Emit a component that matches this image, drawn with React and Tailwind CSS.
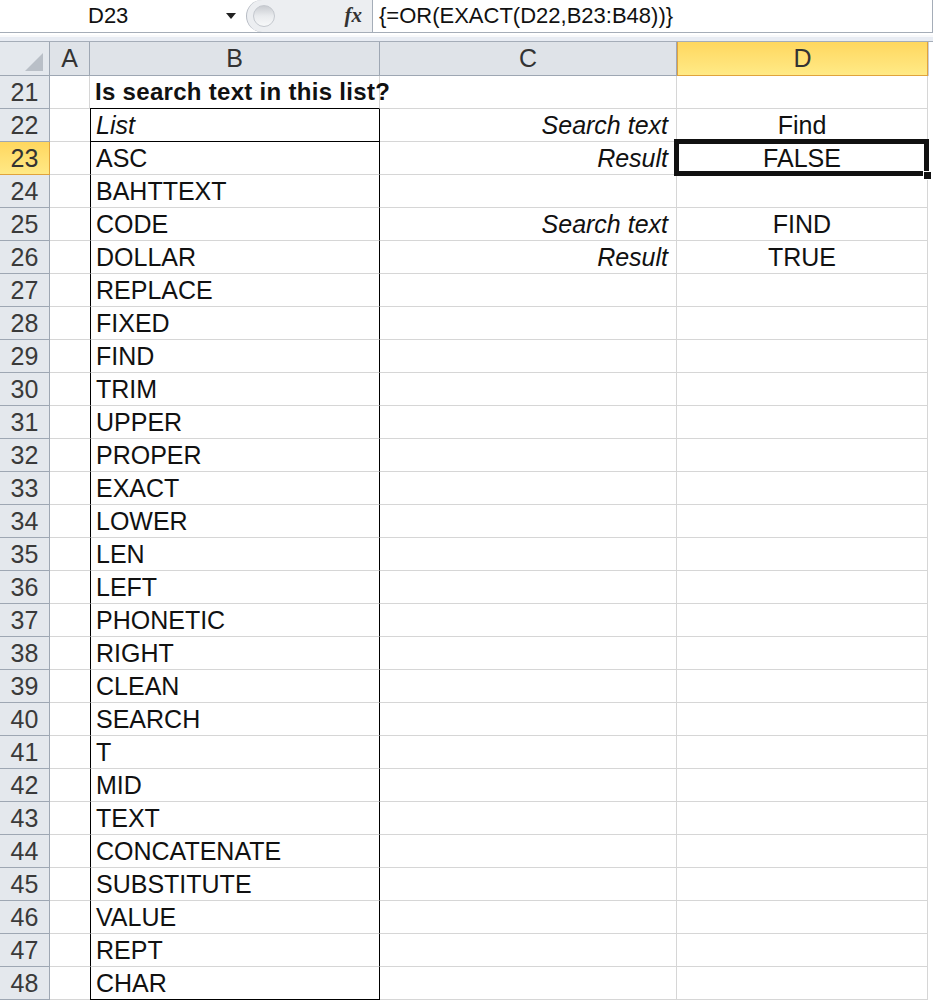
import React from 'react';

const items = [
  'ASC', 'BAHTTEXT', 'CODE', 'DOLLAR', 'REPLACE', 'FIXED', 'FIND', 'TRIM', 'UPPER', 'PROPER',
  'EXACT', 'LOWER', 'LEN', 'LEFT', 'PHONETIC', 'RIGHT', 'CLEAN', 'SEARCH', 'T', 'MID',
  'TEXT', 'CONCATENATE', 'SUBSTITUTE', 'VALUE', 'REPT', 'CHAR',
];

const side = {
  22: ['Search text', 'Find'],
  23: ['Result', 'FALSE'],
  25: ['Search text', 'FIND'],
  26: ['Result', 'TRUE'],
};

function RowHead({ n, active }) {
  return (
    <div
      className={
        'w-[50px] h-full flex items-center justify-center border-r border-b ' +
        (active
          ? 'bg-gradient-to-b from-[#ffd75e] to-[#ffe985] border-[#e0a33d] text-[#333]'
          : 'bg-[#e4e8ed] border-[#9ea7b3] text-[#3a3a3a]')
      }
    >
      {n}
    </div>
  );
}

function Row({ n }) {
  const idx = n - 23;
  const s = side[n];
  let b = null;
  if (n === 21) b = <span className="font-bold whitespace-nowrap text-[24px] tracking-[0.3px]">Is search text in this list?</span>;
  else if (n === 22) b = <span className="italic">List</span>;
  else if (idx >= 0) b = items[idx];

  const inList = n >= 22;
  const selected = n === 23;
  return (
    <div className={'flex h-[33px] relative ' + (selected ? 'z-20' : '')}>
      <RowHead n={n} active={selected} />
      <div className={'w-[40px] h-full border-b border-[#d6d6d6] ' + (inList ? '' : 'border-r')} />
      <div
        className={
          'w-[290px] h-full flex items-center pl-[5px] relative z-10 ' +
          (inList
            ? 'border-x border-x-black ' + (n === 22 || n === 48 ? 'border-b border-b-black' : 'border-b border-b-[#d6d6d6]')
            : 'border-b border-b-black border-r border-r-[#d6d6d6]')
        }
      >
        {b}
      </div>
      <div className="w-[297px] h-full flex items-center justify-end pr-[8px] border-r border-b border-[#d6d6d6] italic">
        {s ? s[0] : ''}
      </div>
      <div className="w-[251px] h-full flex items-center justify-center border-r border-b border-[#d6d6d6] relative">
        {s ? s[1] : ''}
        {selected && (
          <>
            <div className="absolute -left-[3px] -top-[3px] -right-[2px] -bottom-[2px] border-[5px] border-[#111]" />
            <div className="absolute -right-[5px] -bottom-[6px] w-[9px] h-[9px] bg-[#111] border border-white" />
          </>
        )}
      </div>
    </div>
  );
}

export default function App() {
  const rows = [];
  for (let n = 21; n <= 48; n++) rows.push(<Row key={n} n={n} />);

  return (
    <div className="w-[933px] h-[1000px] bg-white overflow-hidden text-[#111] text-[25px] leading-none" style={{ fontFamily: '"Liberation Sans", Arial, sans-serif' }}>
      {/* formula bar */}
      <div className="flex h-[33px] border-b border-[#a5adb8] border-r">
        <div className="w-[246px] h-full flex items-center relative text-[22px]">
          <span className="ml-[88px]">D23</span>
          <svg className="absolute left-[226px] top-[13px]" width="10" height="6" viewBox="0 0 10 6">
            <path d="M0 0 L10 0 L5 6 Z" fill="#222" />
          </svg>
        </div>
        <div className="w-[126px] h-full flex items-center bg-[#eceef1] rounded-l-[18px] border-l border-[#b7bcc4] relative">
          <div className="ml-[6px] w-[22px] h-[22px] rounded-full bg-gradient-to-b from-[#c9ccd1] via-[#e9ebee] to-[#f7f8f9] border border-[#c4c8ce]" />
          <span className="absolute right-[10px] top-[5px] italic font-bold text-[21px] text-[#333]" style={{ fontFamily: '"Liberation Serif", serif' }}>
            fx
          </span>
        </div>
        <div className="flex-1 h-full flex items-center pl-[6px] border-l border-[#a5adb8] text-[22px]">
          {'{=OR(EXACT(D22,B23:B48))}'}
        </div>
      </div>
      {/* spacer strip */}
      <div className="h-[7px] bg-[#e8ecf3] border-b border-[#a5adb8]">
        <div className="h-[2px] mt-[2px] bg-[#f8f9fb]" />
      </div>
      {/* column headers */}
      <div className="flex h-[34px] text-[#333]">
        <div className="w-[50px] h-full bg-[#e4e8ed] border-r border-b border-[#9ea7b3] relative">
          <svg className="absolute right-[6px] bottom-[4px]" width="18" height="18" viewBox="0 0 18 18">
            <path d="M18 0 L18 18 L0 18 Z" fill="#b9bfc7" />
          </svg>
        </div>
        <div className="w-[40px] h-full flex items-center justify-center bg-[#dfe3e8] border-r border-b border-[#9ea7b3]">A</div>
        <div className="w-[290px] h-full flex items-center justify-center bg-[#dfe3e8] border-r border-b border-[#9ea7b3]">B</div>
        <div className="w-[297px] h-full flex items-center justify-center bg-[#dfe3e8] border-r border-b border-[#9ea7b3]">C</div>
        <div className="w-[251px] h-full flex items-center justify-center bg-gradient-to-b from-[#ffd75e] to-[#ffea86] border-x border-b border-[#e0a33d]">D</div>
        <div className="flex-1 h-full border-l border-[#c9ced6]" />
      </div>
      {rows}
    </div>
  );
}
